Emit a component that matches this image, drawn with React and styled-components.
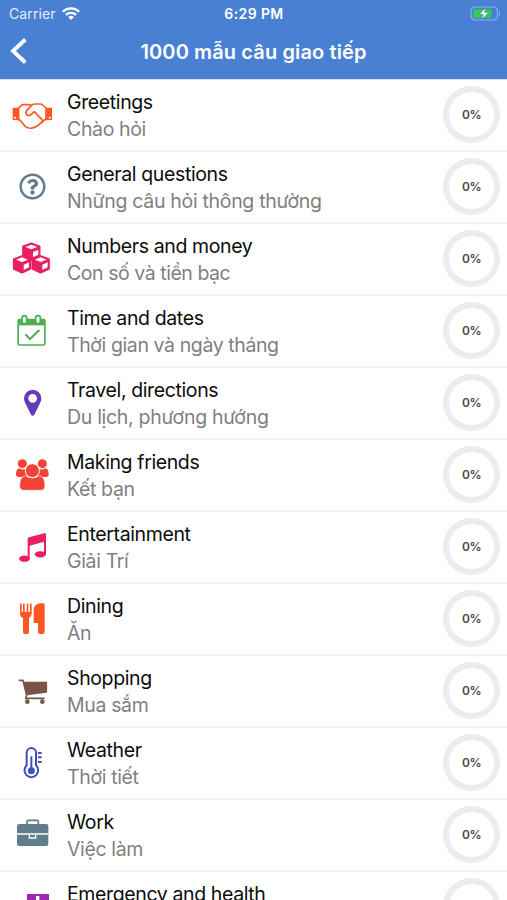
import styled, { createGlobalStyle } from "styled-components";
import { FaRegQuestionCircle } from "react-icons/fa";

const GlobalStyle = createGlobalStyle`
* {
    box-sizing: border-box;
}
body {
    margin: 0;
    background: #fff;
    font-family: Inter, Roboto, "Liberation Sans", sans-serif;
    overflow: hidden;
}
`;
const Screen = styled.div`
display: flex;
flex-direction: column;
width: 507px;
height: 900px;
overflow: hidden;
background: #fff;
`;
const Header = styled.header`
flex: none;
height: 80px;
border-bottom: 1px solid #d3e0f5;
background: #4a80d4;
color: #fff;
`;
const StatusBar = styled.div`
display: grid;
grid-template-columns: 1fr auto 1fr;
align-items: center;
height: 27px;
padding: 0 6px 0 9px;
font-size: 14px;
line-height: 27px;
`;
const Carrier = styled.div`
display: flex;
align-items: center;
gap: 6px;
letter-spacing: 0.1px;
color: #e6edf9;
`;
const Time = styled.div`
margin-right: 2px;
font-size: 14px;
font-weight: 600;
letter-spacing: 0.4px;
`;
const BatterySlot = styled.div`
display: flex;
justify-content: flex-end;
`;
const NavBar = styled.div`
display: grid;
grid-template-columns: 40px 1fr 40px;
align-items: center;
height: 50px;
`;
const BackButton = styled.button`
display: flex;
padding: 0 0 2px 8px;
border: 0;
background: none;
color: inherit;
`;
const NavTitle = styled.h1`
margin: 0;
font-size: 20px;
font-weight: 600;
line-height: 50px;
text-align: center;
white-space: nowrap;
letter-spacing: 0.12px;
`;
const Row = styled.div`
display: flex;
flex: none;
height: 72px;
border-bottom: 2px solid #f2f2f2;
`;
const IconBox = styled.div`
display: flex;
flex: none;
justify-content: center;
width: 64px;
height: 70px;
color: ${(props) => props.$color};
`;
const Drawing = styled.svg`
flex: none;
width: 64px;
height: 72px;
margin-top: -1px;
`;
const QuestionMark = styled(FaRegQuestionCircle)`
width: 27px;
height: 27px;
margin-top: 21px;
`;
const Texts = styled.div`
flex: 1;
padding: 9px 0 0 3px;
white-space: nowrap;
`;
const Title = styled.div`
font-size: 19.5px;
line-height: 26px;
letter-spacing: -0.38px;
color: #0c0c0c;
`;
const Subtitle = styled.div`
font-size: 19.5px;
line-height: 28px;
letter-spacing: ${(props) => props.$spacing || -0.36}px;
color: #7f7f7f;
`;
const Ring = styled.div`
display: flex;
flex: none;
justify-content: center;
align-items: center;
width: 57px;
height: 57px;
margin: 6px 7px 0 0;
border: 6px solid #ebecec;
border-radius: 50%;
font-size: 12px;
font-weight: 600;
letter-spacing: -0.6px;
color: #4a4a4a;
`;

const Handshake = () => (
    <Drawing viewBox="0 0 192 216">
        <g transform="translate(24 48)" strokeLinejoin="round" strokeLinecap="round">
            <path d="M14 38H31V75H14ZM115 38H132V75H115Z" fill="currentColor" />
            <circle cx="21" cy="68" r="3" fill="#fff" />
            <circle cx="125" cy="68" r="3" fill="#fff" />
            <path
                d="M32 39L43 29H60Q66 29 70 31Q76 27 82 27H97Q101 27 104 30L114 39V74H110L88 93Q67 106 51 94L36 75H32Z"
                fill="#fff"
                stroke="currentColor"
                strokeWidth="5"
            />
            <path d="M70 32L56 47Q51 54 57 60Q64 64 70 58L79 50L101 73Q106 78 104 81" fill="none" stroke="currentColor" strokeWidth="5" />
        </g>
    </Drawing>
);
const Cube = ({ x, y }) => (
    <g transform={`translate(${x} ${y})`}>
        <path d="M0 1L24 10V38L0 49L-24 38V10Z" fill="currentColor" stroke="currentColor" strokeWidth="7" strokeLinejoin="round" />
        <path d="M0 4L18 11L0 18L-18 11Z" fill="#fff" />
        <path d="M5 26L21 19V34L5 42Z" fill="#fff" />
    </g>
);
const Cubes = () => (
    <Drawing viewBox="0 0 192 216">
        <Cube x={94} y={61} />
        <Cube x={66} y={99} />
        <Cube x={122} y={99} />
    </Drawing>
);
const CalendarCheck = () => (
    <Drawing viewBox="0 0 192 216" fill="none" stroke="currentColor" strokeWidth="5">
        <rect x="54.500" y="74" width="80" height="76" rx="3" />
        <path d="M54 73H135V91H54Z" fill="currentColor" stroke="none" />
        <rect x="66" y="62" width="14" height="24" rx="7" fill="#fff" strokeWidth="5" />
        <rect x="107" y="62" width="14" height="24" rx="7" fill="#fff" strokeWidth="5" />
        <path d="M76 118L90 132L118 105" strokeWidth="6" />
    </Drawing>
);
const Pin = () => (
    <Drawing viewBox="0 0 192 216">
        <path
            fill="currentColor"
            fillRule="evenodd"
            d="M98 68A26 26 0 0 0 72 94C72 102 76 109 79 115L93 143Q98 149 103 143L117 115C120 109 124 102 124 94A26 26 0 0 0 98 68ZM98 81A13 13 0 1 1 98 107A13 13 0 1 1 98 81Z"
        />
    </Drawing>
);
const Friends = () => (
    <Drawing viewBox="0 0 192 216" fill="currentColor">
        <circle cx="67" cy="74" r="13.500" />
        <circle cx="127" cy="74" r="13.500" />
        <path d="M57 88Q67 94 78 89L82 114H56Q48 114 48 106Q48 91 57 88Z" />
        <path d="M137 88Q127 94 116 89L112 114H138Q146 114 146 106Q146 91 137 88Z" />
        <path d="M76 110Q97 123 118 110Q135 113 135 140Q135 154 121 154H73Q59 154 59 140Q59 113 76 110Z" stroke="#fff" strokeWidth="2" />
        <circle cx="97" cy="95" r="21" stroke="#fff" strokeWidth="3" />
    </Drawing>
);
const Music = () => (
    <Drawing viewBox="0 0 192 216" fill="currentColor">
        <path d="M83 84Q83 80 87 79L133 67Q138 66 138 70V130H132V92L89 104V143H83Z" />
        <ellipse cx="73.500" cy="143" rx="16" ry="9.500" />
        <ellipse cx="121" cy="130" rx="16.500" ry="9.500" />
    </Drawing>
);
const Cutlery = () => (
    <Drawing viewBox="0 0 192 216" fill="currentColor">
        <path d="M60 63Q62.500 59 65 63V87H69V63Q72 59 74 63V87H80V63Q82 59 85 63V87H90V63Q92.500 59 95 63V92Q95 101 87 105V147Q87 153 78 153Q69 153 69 147V105Q60 101 60 92Z" />
        <path d="M131 61Q134 61 134 64V147Q134 153 124 153Q114 153 114 147V120H104Q101 120 101 117V84Q101 61 123 61Z" />
    </Drawing>
);
const Cart = () => (
    <Drawing viewBox="0 0 192 216" fill="none" stroke="currentColor" strokeWidth="5" strokeLinecap="round" strokeLinejoin="round">
        <path d="M58 76H69L80 121L77 130H132" />
        <path d="M74 83H139V111L81 118Z" fill="currentColor" />
        <circle cx="82" cy="140" r="7" fill="currentColor" stroke="none" />
        <circle cx="127" cy="140" r="7" fill="currentColor" stroke="none" />
    </Drawing>
);
const Thermometer = () => (
    <Drawing viewBox="0 0 192 216" fill="none" stroke="currentColor" strokeWidth="6">
        <path d="M80 77A14 14 0 0 1 108 77V115A20.500 20.500 0 1 1 80 115Z" />
        <path d="M94 88V131" />
        <circle cx="94" cy="131" r="10.500" fill="currentColor" stroke="none" />
        <path d="M114 78H125M114 91H125M114 105H125" />
    </Drawing>
);
const Briefcase = () => (
    <Drawing viewBox="0 0 192 216">
        <path d="M81 76V67Q81 64 84 64H112Q115 64 115 67V76" fill="none" stroke="currentColor" strokeWidth="5" />
        <rect x="51" y="75" width="94" height="66" rx="7" fill="currentColor" />
        <path d="M51 105H145M88 105V117H107V105" fill="none" stroke="#fff" strokeWidth="4" />
    </Drawing>
);
const FirstAid = () => (
    <Drawing viewBox="0 0 192 216">
        <path d="M81 69H147V150H81Z" fill="currentColor" />
        <path d="M113 75V125M94 99H132" stroke="#fff" strokeWidth="10" />
    </Drawing>
);
const Wifi = () => (
    <svg width="18" height="13" viewBox="0 0 18 13" fill="none" stroke="#fff" strokeWidth="2.300">
        <path d="M0.900 4.700A11.600 11.600 0 0 1 17.100 4.700" />
        <path d="M3.900 7.900A7.400 7.400 0 0 1 14.100 7.900" />
        <path d="M9 13L6.200 10.200A4 4 0 0 1 11.800 10.200Z" fill="#fff" stroke="none" />
    </svg>
);
const Battery = () => (
    <svg width="31" height="15" viewBox="0 0 31 15">
        <rect x="1" y="1" width="26.500" height="13" rx="4" fill="none" stroke="#8fb0e5" strokeWidth="1.200" />
        <path d="M29 5Q31 7.500 29 10Z" fill="#8fb0e5" />
        <rect x="3" y="3" width="18.500" height="9" rx="2" fill="#35c759" />
        <path d="M15.500 2L9.500 8.300H13.300L12 13L18.500 6.500H14.600Z" fill="#fff" stroke="#4a80d4" strokeWidth="0.500" />
    </svg>
);

const topics = [
    { title: "Greetings", sub: "Chào hỏi", color: "#ff5722", icon: <Handshake /> },
    { title: "General questions", sub: "Những câu hỏi thông thường", spacing: -0.32, color: "#607d8b", icon: <QuestionMark /> },
    { title: "Numbers and money", sub: "Con số và tiền bạc", spacing: -0.45, color: "#e91e63", icon: <Cubes /> },
    { title: "Time and dates", sub: "Thời gian và ngày tháng", spacing: -0.4, color: "#4caf50", icon: <CalendarCheck /> },
    { title: "Travel, directions", sub: "Du lịch, phương hướng", spacing: -0.3, color: "#673ab7", icon: <Pin /> },
    { title: "Making friends", sub: "Kết bạn", color: "#f44336", icon: <Friends /> },
    { title: "Entertainment", sub: "Giải Trí", color: "#e91e63", icon: <Music /> },
    { title: "Dining", sub: "Ăn", color: "#ff5722", icon: <Cutlery /> },
    { title: "Shopping", sub: "Mua sắm", color: "#795548", icon: <Cart /> },
    { title: "Weather", sub: "Thời tiết", color: "#3f51b5", icon: <Thermometer /> },
    { title: "Work", sub: "Việc làm", color: "#607d8b", icon: <Briefcase /> },
    { title: "Emergency and health", sub: "", color: "#9c27b0", icon: <FirstAid /> },
];

const TopicRow = (props) => {
    const { title, sub, spacing, color, icon } = props.topic;
    return <Row>
        <IconBox $color={color}>{icon}</IconBox>
        <Texts>
            <Title>{title}</Title>
            <Subtitle $spacing={spacing}>{sub}</Subtitle>
        </Texts>
        <Ring>{sub && "0%"}</Ring>
    </Row>
}

const App = () => {
    return <Screen>
        <GlobalStyle />
        <Header>
            <StatusBar>
                <Carrier>Carrier<Wifi /></Carrier>
                <Time>6:29 PM</Time>
                <BatterySlot><Battery /></BatterySlot>
            </StatusBar>
            <NavBar>
                <BackButton aria-label="Back">
                    <svg width="20" height="28" viewBox="0 0 20 28" fill="none" stroke="#fff" strokeWidth="3.800">
                        <path d="M17.300 2.500L5 14L17.300 25.500" />
                    </svg>
                </BackButton>
                <NavTitle>1000 mẫu câu giao tiếp</NavTitle>
            </NavBar>
        </Header>
        {topics.map((topic) => <TopicRow key={topic.title} topic={topic} />)}
    </Screen>
}
export default App;
